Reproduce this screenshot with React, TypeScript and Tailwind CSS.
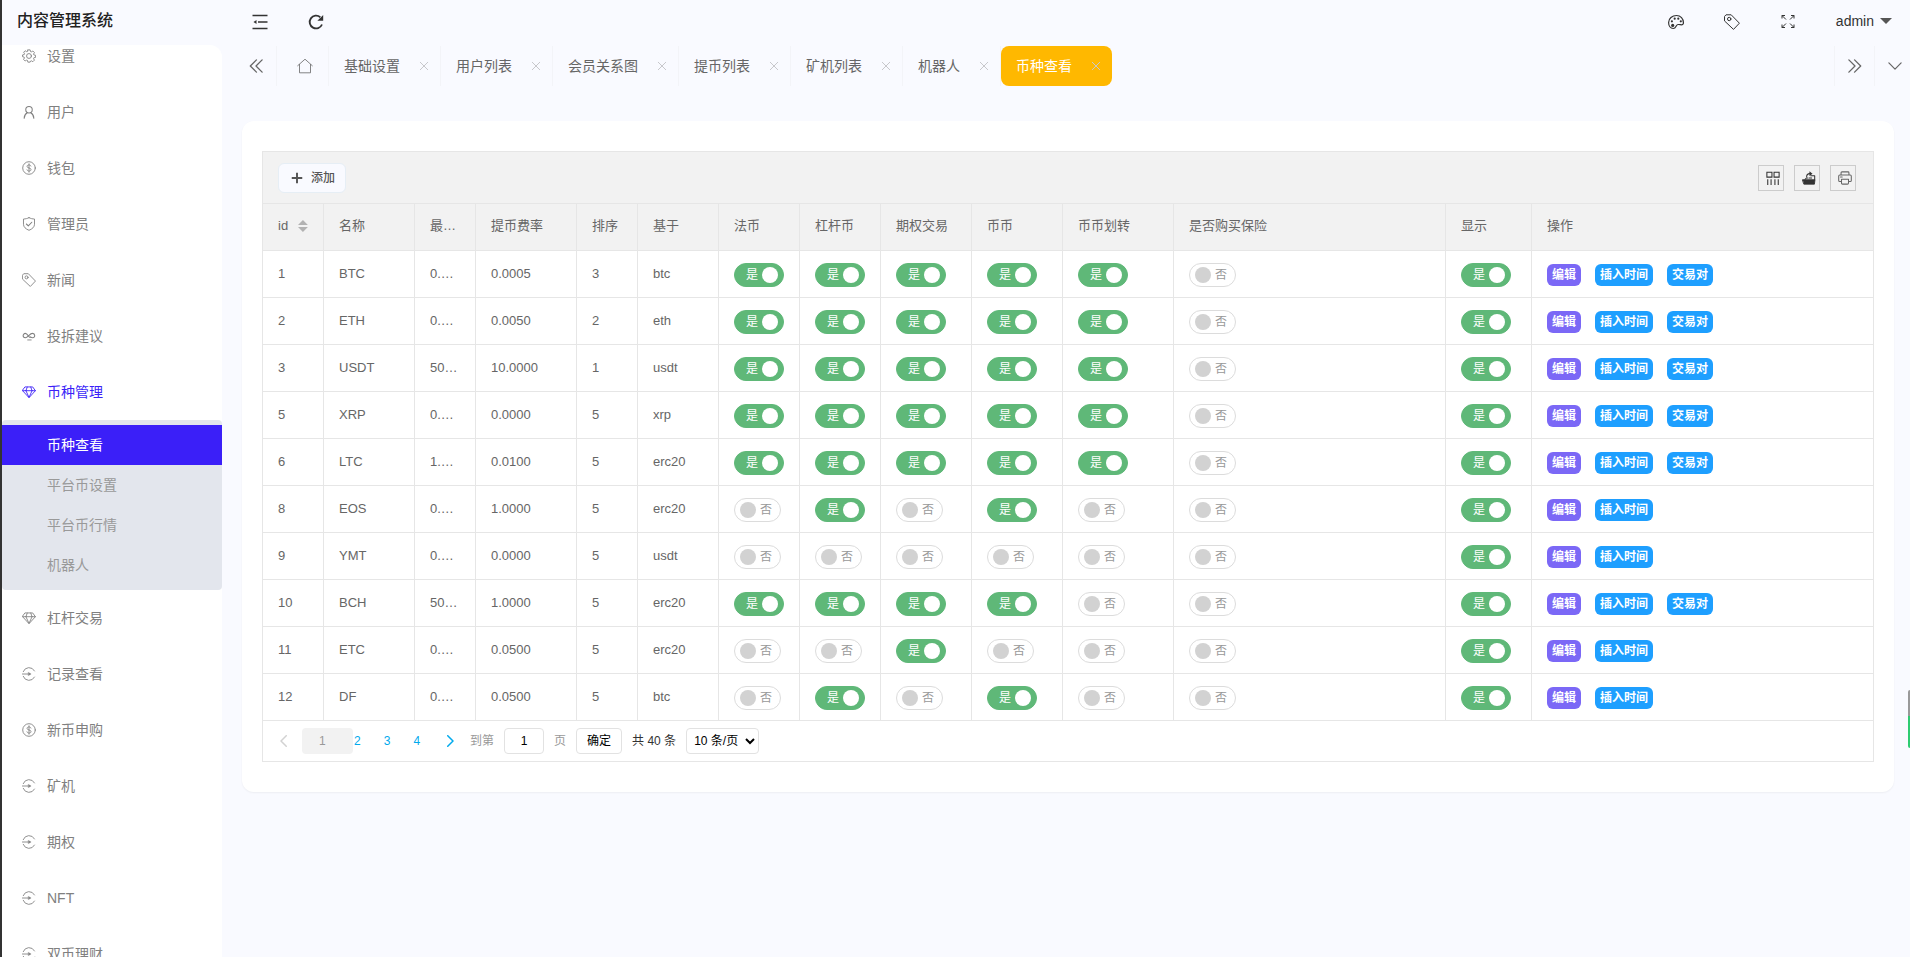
import { useState, type ReactNode } from 'react'
import { clsx } from 'clsx'

type IconProps = { className?: string }

function Svg({ className, children }: IconProps & { children: ReactNode }) {
  return (
    <svg
      viewBox="0 0 16 16"
      fill="none"
      stroke="currentColor"
      strokeLinecap="round"
      strokeLinejoin="round"
      className={clsx('shrink-0', className)}
      aria-hidden="true"
    >
      {children}
    </svg>
  )
}

const GearIcon = (p: IconProps) => (
  <Svg {...p}>
    <path d="M6.7 1h2.6l.4 1.9 1 .4 1.7-1 1.8 1.8-1 1.7.4 1 1.9.4v2.4l-1.900.4-.4 1 1 1.700-1.800 1.800-1.700-1-1 .4L9.300 15H6.700l-.4-1.900-1-.4-1.700 1-1.800-1.800 1-1.700-.4-1L.6 8.800V6.800l1.900-.4.4-1-1-1.700 1.700-1.700 1.700 1 1-.4z" />
    <circle cx="8" cy="8" r="2.800" />
  </Svg>
)

const UserIcon = (p: IconProps) => (
  <Svg {...p}>
    <circle cx="8" cy="5.500" r="3.700" strokeWidth="1.200" />
    <path d="M2.500 15c0-3 1.500-5 3.500-6.200M13.500 15c0-3-1.500-5-3.500-6.200" strokeWidth="1.200" />
  </Svg>
)

const DollarIcon = (p: IconProps) => (
  <Svg {...p}>
    <circle cx="8" cy="8" r="7.200" />
    <path d="M10.200 5.800c-.3-.9-1.100-1.300-2.200-1.300-1.300 0-2.200.6-2.200 1.700 0 2.400 4.500 1.200 4.500 3.600 0 1.100-.9 1.700-2.300 1.700-1.200 0-2-.5-2.300-1.400M8 3.200v9.600" />
  </Svg>
)

const ShieldIcon = (p: IconProps) => (
  <Svg {...p}>
    <path d="M8 .8c2 1 4 1.400 6.300 1.500v6c0 3.200-2.600 5.400-6.300 6.900-3.700-1.500-6.300-3.700-6.300-6.900v-6C4 2.200 6 1.800 8 .8z" />
    <path d="M5 8l2.200 2.100L11.200 6" strokeWidth="1.200" />
  </Svg>
)

const TagIcon = (p: IconProps) => (
  <Svg {...p}>
    <path d="M.8 2.200L2 .8h5.200l8.200 8.400-5.900 6.200L.8 7.200z" />
    <circle cx="5.200" cy="5" r="1.700" />
  </Svg>
)

const LinkIcon = (p: IconProps) => (
  <Svg {...p}>
    <path d="M9.500 9.500C8 10.500 6.500 5 3.800 5A2.500 2.500 0 0 0 3.800 10C6.500 10 9 5 11.800 5a2.500 2.500 0 0 1 .4 5c-1 0-1.800-.4-2.500-1" strokeWidth="1.200" />
    <path d="M6.500 12.500h4" />
  </Svg>
)

const DiamondIcon = (p: IconProps) => (
  <Svg {...p}>
    <path d="M3.800 2.200h8.400L15.300 6.500 8 14.500.7 6.500zM.7 6.500h14.600M4.500 6.500L8 14.200l3.500-7.700M4.500 6.500L6 2.400M11.500 6.500L10 2.400" />
  </Svg>
)

const EnterIcon = (p: IconProps) => (
  <Svg {...p}>
    <path d="M14.300 4.500A7.100 7.100 0 0 0 1.400 5.300M14.300 11.500A7.100 7.100 0 0 1 1.400 10.700" />
    <path d="M.5 8h8" />
    <path d="M7.500 6.300L10.400 8 7.500 9.700z" fill="currentColor" strokeWidth=".5" />
  </Svg>
)

const FoldIcon = (p: IconProps) => (
  <Svg {...p}>
    <path d="M.5 1.500h15M6 8h9.500M.5 14.500h15" strokeWidth="1.600" strokeLinecap="butt" />
    <path d="M4.500 6v4L1.500 8z" fill="currentColor" stroke="none" />
  </Svg>
)

const RefreshIcon = (p: IconProps) => (
  <Svg {...p}>
    <path d="M14 10.500A6.400 6.400 0 1 1 12.300 3.200" strokeWidth="1.800" strokeLinecap="butt" />
    <path d="M15.200 1v5.800H9.400z" fill="currentColor" stroke="none" />
  </Svg>
)

const HomeIcon = (p: IconProps) => (
  <Svg {...p}>
    <path d="M.7 7.700L8 1.200l7.300 6.500M2.500 6.500v8.300h11V6.500" strokeWidth=".8" />
  </Svg>
)

const PaletteIcon = (p: IconProps) => (
  <Svg {...p}>
    <path d="M15.400 9.300C15.600 4.500 12.500 1.500 8.500 1.500c-4.300 0-7.900 3-7.900 7 0 3.300 1.800 6 4.700 6 3.200 0 2-3.600 4.700-4 2.300-.3 4.700 1.700 5.400-1.200z" strokeWidth="1.200" />
    <g fill="currentColor" stroke="none">
      <circle cx="4.700" cy="11.400" r="1.600" />
      <circle cx="3.900" cy="7.300" r="1.100" />
      <circle cx="6.700" cy="4.700" r="1.100" />
      <circle cx="10.300" cy="4.700" r="1.100" />
      <circle cx="12.800" cy="7.300" r="1.100" />
    </g>
  </Svg>
)

const ExpandIcon = (p: IconProps) => (
  <Svg {...p}>
    <path d="M2 4.500V1.500h3M11 1.500h3v3M2 10.500v3h3M14 10.500v3h-3M2 1.500l4 4M14 1.500l-4 4M2 13.500l4-4M14 13.500l-4-4" strokeLinecap="butt" />
  </Svg>
)

const ColumnsIcon = (p: IconProps) => (
  <Svg {...p}>
    <path d="M1 1.500h5.800v5.500H1zM9.200 1.500H15v5.500H9.200zM2 9.500V16M5.800 9.500V16M10.200 9.500V16M14 9.500V16" strokeLinecap="butt" strokeLinejoin="miter" strokeWidth="1.200" />
  </Svg>
)

const ExportIcon = (p: IconProps) => (
  <Svg {...p}>
    <path d="M.8 10h14l-.6 5H2.500z" fill="currentColor" />
    <path d="M3.500 9.500L5 8h1.500M10 5.500h4.500V10M5.300 6.500C5.300 4 6.500 3 9 3M8 8h3" strokeWidth="1.200" />
    <path d="M8.500.3L12 3 8.500 5.700z" fill="currentColor" stroke="none" />
  </Svg>
)

const PrintIcon = (p: IconProps) => (
  <Svg {...p}>
    <path d="M3.500 4.500V2q0-1 1-1h7q1 0 1 1v2.500M3.500 12H2q-1.200 0-1.200-1.200V6Q.8 4.600 2 4.600h12q1.200 0 1.200 1.400v4.800Q15.200 12 14 12h-1.500M4 9.500h8v4.300q0 1.200-1.200 1.200H5.200Q4 15 4 13.800zM2.800 6.800h2" strokeWidth="1.200" />
  </Svg>
)

const ChevronDouble = ({ className, flip }: IconProps & { flip?: boolean }) => (
  <Svg className={className}>
    <path d={flip ? 'M1 1l7 7-7 7M7.500 1l7 7-7 7' : 'M8.500 1l-7 7 7 7M15 1L8 8l7 7'} strokeWidth="1.500" />
  </Svg>
)

type MenuItem = { label: string; icon: (p: IconProps) => ReactNode; children?: string[] }

const menu: MenuItem[] = [
  { label: '设置', icon: GearIcon },
  { label: '用户', icon: UserIcon },
  { label: '钱包', icon: DollarIcon },
  { label: '管理员', icon: ShieldIcon },
  { label: '新闻', icon: TagIcon },
  { label: '投拆建议', icon: LinkIcon },
  { label: '币种管理', icon: DiamondIcon, children: ['币种查看', '平台币设置', '平台币行情', '机器人'] },
  { label: '杠杆交易', icon: DiamondIcon },
  { label: '记录查看', icon: EnterIcon },
  { label: '新币申购', icon: DollarIcon },
  { label: '矿机', icon: EnterIcon },
  { label: '期权', icon: EnterIcon },
  { label: 'NFT', icon: EnterIcon },
  { label: '双币理财', icon: EnterIcon },
]

const tabs = ['基础设置', '用户列表', '会员关系图', '提币列表', '矿机列表', '机器人', '币种查看']

const switchCols = ['法币', '杠杆币', '期权交易', '币币', '币币划转', '是否购买保险', '显示']

type Coin = {
  id: number
  name: string
  min: string
  rate: string
  sort: number
  base: string
  // one digit per switch column, 1 = on
  flags: string
  pair: boolean
}

const coins: Coin[] = [
  { id: 1, name: 'BTC', min: '0.0010', rate: '0.0005', sort: 3, base: 'btc', flags: '1111101', pair: true },
  { id: 2, name: 'ETH', min: '0.0100', rate: '0.0050', sort: 2, base: 'eth', flags: '1111101', pair: true },
  { id: 3, name: 'USDT', min: '50.000', rate: '10.0000', sort: 1, base: 'usdt', flags: '1111101', pair: true },
  { id: 5, name: 'XRP', min: '0.0000', rate: '0.0000', sort: 5, base: 'xrp', flags: '1111101', pair: true },
  { id: 6, name: 'LTC', min: '1.0000', rate: '0.0100', sort: 5, base: 'erc20', flags: '1111101', pair: true },
  { id: 8, name: 'EOS', min: '0.0000', rate: '1.0000', sort: 5, base: 'erc20', flags: '0101001', pair: false },
  { id: 9, name: 'YMT', min: '0.0000', rate: '0.0000', sort: 5, base: 'usdt', flags: '0000001', pair: false },
  { id: 10, name: 'BCH', min: '50.000', rate: '1.0000', sort: 5, base: 'erc20', flags: '1111001', pair: true },
  { id: 11, name: 'ETC', min: '0.0000', rate: '0.0500', sort: 5, base: 'erc20', flags: '0010001', pair: false },
  { id: 12, name: 'DF', min: '0.0000', rate: '0.0500', sort: 5, base: 'btc', flags: '0101001', pair: false },
]

function Switch({ label, initial }: { label: string; initial: boolean }) {
  const [on, setOn] = useState(initial)
  return (
    <label
      className={clsx(
        'mt-0.5 flex h-6 cursor-pointer items-center gap-1 rounded-full border px-[5px] text-xs',
        on
          ? 'w-[50px] justify-end border-[#5fb878] bg-[#5fb878] text-white'
          : 'w-[47px] flex-row-reverse justify-end border-[#dcdcdc] bg-white text-[#999]',
      )}
    >
      <input
        type="checkbox"
        checked={on}
        onChange={(e) => setOn(e.target.checked)}
        aria-label={label}
        className="sr-only"
      />
      <span>{on ? '是' : '否'}</span>
      <span className={clsx('size-4 rounded-full', on ? 'bg-white' : 'bg-[#d2d2d2]')} />
    </label>
  )
}

function Sidebar() {
  return (
    <nav className="min-h-0 flex-1 overflow-hidden rounded-tr-xl bg-white text-sm text-[#808080]">
      <ul className="-mt-[17px]">
        {menu.map((m) => (
          <li key={m.label}>
            <a
              href="#"
              className={clsx('flex h-14 items-center gap-[11px] pl-5', m.children && 'text-[#3b1ff8]')}
            >
              <m.icon className="size-3.5" />
              {m.label}
            </a>
            {m.children && (
              <ul className="rounded-sm bg-[#e3e6ed] py-[5px] text-[#999]">
                {m.children.map((c, i) => (
                  <li key={c}>
                    <a
                      href="#"
                      className={clsx('flex h-10 items-center pl-[45px]', i === 0 && 'bg-[#3b1ff8] text-white')}
                    >
                      {c}
                    </a>
                  </li>
                ))}
              </ul>
            )}
          </li>
        ))}
      </ul>
    </nav>
  )
}

function TabBar() {
  return (
    <div className="flex h-10 text-sm text-[#666]">
      <button type="button" aria-label="left" className="flex w-[55px] items-center justify-center border-r border-[#f3f4f8] pl-3.5">
        <ChevronDouble className="size-3.5" />
      </button>
      <a href="#" aria-label="home" className="flex w-[52px] items-center justify-center border-r border-[#f3f4f8] pl-1">
        <HomeIcon className="size-4" />
      </a>
      {tabs.map((t) => {
        const active = t === '币种查看'
        return (
          <div
            key={t}
            className={clsx(
              'flex items-center gap-[19px] pl-[15px] pr-[11px]',
              active ? 'rounded-lg bg-[#ffb800] text-white' : 'border-r border-[#f3f4f8]',
            )}
          >
            <a href="#">{t}</a>
            <button type="button" aria-label="close" className="text-[#c8c8cc]">
              <Svg className="size-2.5">
                <path d="M2 2l12 12M14 2L2 14" strokeWidth="1.600" />
              </Svg>
            </button>
          </div>
        )
      })}
      <div className="ml-auto flex">
        <button type="button" aria-label="right" className="flex w-10 items-center justify-center border-l border-[#f3f4f8]">
          <ChevronDouble flip className="size-3.5" />
        </button>
        <button type="button" aria-label="more" className="flex w-9 items-center justify-center border-l border-[#f3f4f8] pl-1">
          <Svg className="size-3.5">
            <path d="M1 4.500l7 7 7-7" strokeWidth="1.400" />
          </Svg>
        </button>
      </div>
    </div>
  )
}

const cellCls = 'border-r border-b border-[#e6e6e6] px-[15px] text-left font-normal last:border-r-0'
const actionCls = 'h-[22px] rounded-md px-[5px] text-xs font-bold text-white'
const toolCls = 'flex size-[26px] items-center justify-center border border-[#ccc] pl-[3px]'

function CoinTable() {
  return (
    <table className="w-full table-fixed border-separate border-spacing-0 text-[13px] text-[#666]">
      <colgroup>
        <col className="w-[61px]" />
        <col className="w-[91px]" />
        <col className="w-[61px]" />
        <col className="w-[101px]" />
        <col className="w-[61px]" />
        <col className="w-[81px]" />
        <col className="w-[81px]" />
        <col className="w-[81px]" />
        <col className="w-[91px]" />
        <col className="w-[91px]" />
        <col className="w-[111px]" />
        <col />
        <col className="w-[86px]" />
        <col className="w-[341px]" />
      </colgroup>
      <thead className="bg-[#f2f2f2]">
        <tr className="h-[47px]">
          <th className={clsx(cellCls, 'pb-0.5')}>
            <span className="flex items-center gap-2.5">
              id
              <svg viewBox="0 0 10 12" className="h-3 w-2.5 fill-[#b2b2b2]" aria-hidden="true">
                <path d="M0 5l5-5 5 5zM0 7l5 5 5-5z" />
              </svg>
            </span>
          </th>
          <th className={clsx(cellCls, 'pb-0.5')}>名称</th>
          <th className={clsx(cellCls, 'truncate pb-0.5')}>最小提币</th>
          <th className={clsx(cellCls, 'pb-0.5')}>提币费率</th>
          <th className={clsx(cellCls, 'pb-0.5')}>排序</th>
          <th className={clsx(cellCls, 'pb-0.5')}>基于</th>
          {switchCols.map((c) => (
            <th key={c} className={clsx(cellCls, 'pb-0.5')}>{c}</th>
          ))}
          <th className={clsx(cellCls, 'pb-0.5')}>操作</th>
        </tr>
      </thead>
      <tbody>
        {coins.map((c) => (
          <tr key={c.id} className="h-[47px]">
            <td className={cellCls}>{c.id}</td>
            <td className={cellCls}>{c.name}</td>
            <td className={clsx(cellCls, 'truncate')}>{c.min}</td>
            <td className={cellCls}>{c.rate}</td>
            <td className={cellCls}>{c.sort}</td>
            <td className={cellCls}>{c.base}</td>
            {switchCols.map((s, i) => (
              <td key={s} className={cellCls}>
                <Switch label={`${c.name} ${s}`} initial={c.flags[i] === '1'} />
              </td>
            ))}
            <td className={cellCls}>
              <div className="mt-0.5 flex gap-3.5">
                <button type="button" className={clsx(actionCls, 'bg-[#7b68f6]')}>编辑</button>
                <button type="button" className={clsx(actionCls, 'bg-[#1e9fff]')}>插入时间</button>
                {c.pair && (
                  <button type="button" className={clsx(actionCls, 'bg-[#1e9fff]')}>交易对</button>
                )}
              </div>
            </td>
          </tr>
        ))}
      </tbody>
    </table>
  )
}

function Pagination() {
  return (
    <div className="flex h-10 items-center pl-[15px] text-xs text-[#333]">
      <button type="button" aria-label="prev" className="text-[#d2d2d2]">
        <Svg className="size-3">
          <path d="M11 1L4 8l7 7" strokeWidth="2" />
        </Svg>
      </button>
      <span className="ml-3 flex h-[26px] w-[51px] items-center rounded-sm bg-[#f2f2f2] pl-[17px] text-[#999]">1</span>
      <div className="flex gap-[23px] pl-px text-[#01aaed]">
        <a href="#">2</a>
        <a href="#">3</a>
        <a href="#">4</a>
      </div>
      <button type="button" aria-label="next" className="ml-6 text-[#01aaed]">
        <Svg className="size-3">
          <path d="M5 1l7 7-7 7" strokeWidth="2" />
        </Svg>
      </button>
      <label htmlFor="page" className="ml-3.5 text-[#999]">到第</label>
      <input
        id="page"
        defaultValue="1"
        className="ml-2.5 h-[26px] w-10 rounded-sm border border-[#e2e2e2] bg-white text-center text-black"
      />
      <span className="ml-2.5 text-[#999]">页</span>
      <button type="button" className="ml-2.5 h-[26px] w-[46px] rounded-sm border border-[#e2e2e2] bg-white text-black">
        确定
      </button>
      <span className="ml-2.5">共 40 条</span>
      <select aria-label="size" className="ml-2.5 h-[26px] w-[73px] rounded-sm border border-[#e2e2e2] bg-white pl-[3px] text-black">
        <option>10 条/页</option>
        <option>20 条/页</option>
      </select>
    </div>
  )
}

export default function App() {
  return (
    <div className="relative flex h-screen overflow-hidden border-l-2 border-[#333] bg-[#f9faff] font-['Liberation_Sans','Noto_Sans_CJK_SC',sans-serif]">
      <aside className="flex w-[220px] shrink-0 flex-col">
        <h1 className="flex h-[45px] items-center pb-1 pl-[15px] text-base font-medium text-[#222]">内容管理系统</h1>
        <Sidebar />
      </aside>

      <div className="flex min-w-0 flex-1 flex-col">
        <header className="flex h-[46px] items-center pr-[18px] pb-0.5 pl-[30px] text-sm text-[#333]">
          <button type="button" aria-label="fold"><FoldIcon className="size-4" /></button>
          <button type="button" aria-label="refresh" className="ml-10"><RefreshIcon className="size-4" /></button>
          <div className="ml-auto flex items-center gap-10">
            <button type="button" aria-label="theme"><PaletteIcon className="size-4" /></button>
            <button type="button" aria-label="note"><TagIcon className="size-4" /></button>
            <button type="button" aria-label="fullscreen"><ExpandIcon className="size-4" /></button>
            <a href="#" className="flex items-center gap-1.5 pb-0.5">
              admin
              <svg viewBox="0 0 12 6" className="h-1.5 w-3 fill-[#555]" aria-hidden="true">
                <path d="M0 0h12L6 6z" />
              </svg>
            </a>
          </div>
        </header>
        <TabBar />

        <main className="mt-[35px] mr-4 ml-5 rounded-xl bg-white px-5 py-[30px] shadow-xs">
          <div className="border border-[#e6e6e6]">
            <div className="flex h-[52px] items-center justify-between border-b border-[#e6e6e6] bg-[#f2f2f2] pr-[17px] pl-[15px]">
              <button
                type="button"
                className="flex h-[30px] items-center gap-2 rounded-md border border-[#e6eef5] bg-[#f9faff] pr-2.5 pl-3 text-xs font-medium text-[#555]"
              >
                <Svg className="size-3">
                  <path d="M8 1v14M1 8h14" strokeWidth="2.600" strokeLinecap="butt" />
                </Svg>
                添加
              </button>
              <div className="flex gap-2.5 text-[#333]">
                <button type="button" aria-label="columns" className={toolCls}><ColumnsIcon className="size-3.5" /></button>
                <button type="button" aria-label="export" className={toolCls}><ExportIcon className="size-3.5" /></button>
                <button type="button" aria-label="print" className={clsx(toolCls, 'text-[#666]')}><PrintIcon className="size-3.5" /></button>
              </div>
            </div>
            <CoinTable />
            <Pagination />
          </div>
        </main>
      </div>

      {/* floating meter docked to the window edge */}
      <div className="absolute top-[690px] right-0 h-[58px] w-0.5 rounded-l-sm bg-linear-to-b from-[#999] from-45% to-[#2ecc71] to-45% shadow-md" />
    </div>
  )
}
